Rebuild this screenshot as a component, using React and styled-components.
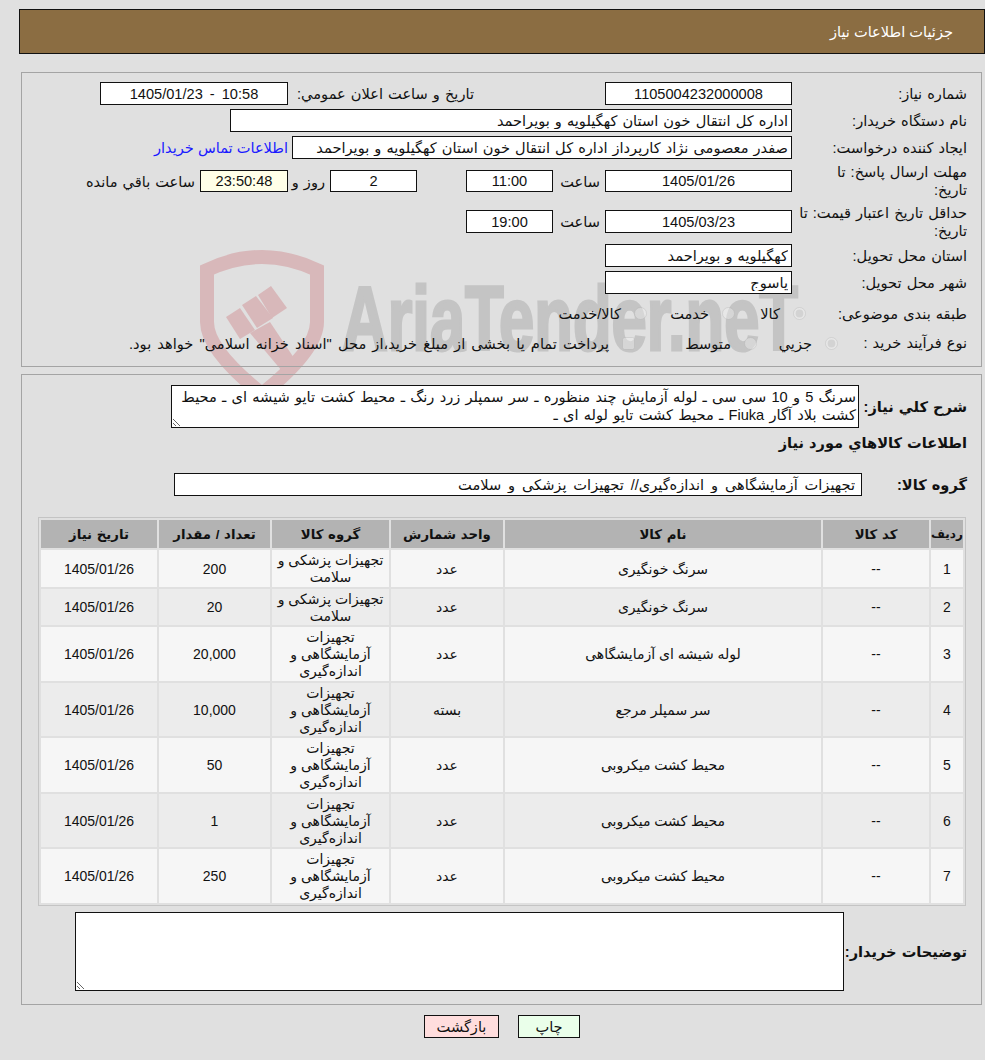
import React from 'react';
import styled, { createGlobalStyle } from 'styled-components';

const GlobalStyle = createGlobalStyle`
	html, body { margin: 0; padding: 0; background: #e0e0e0; }
	body { font-family: "Liberation Sans", "DejaVu Sans", sans-serif; font-size: 14.6px; color: #111; word-spacing: 1px; }
	* { box-sizing: border-box; }
`;

const Page = styled.div`
	position: relative;
	width: 985px;
	height: 1060px;
	padding: 9px 0 0 19px;
	overflow: hidden;
`;
const Watermark = styled.svg`
	position: absolute;
	left: 0;
	top: 0;
	width: 985px;
	height: 420px;
`;
const Content = styled.div`
	position: relative;
	display: flex;
	flex-direction: column;
`;
const Header = styled.div`
	height: 45px;
	background: #8b6d42;
	border: 1px solid #111;
	color: #fff;
	display: flex;
	align-items: center;
	padding-right: 31px;
	word-spacing: 0;
`;
const Panel = styled.div`
	margin: ${(p) => p.$top}px 3px 0 2px;
	border: 1px solid #a4a4a4;
	height: ${(p) => p.$h}px;
	padding-right: 14px;
`;
const FormGrid = styled.div`
	padding-top: 9px;
	display: grid;
	grid-template-rows: 23px 23px 23px 36px 37px 23px 23px 31px 20px;
	row-gap: 4px;
`;
const Row = styled.div`
	display: flex;
	align-items: center;
`;
const Label = styled.div`
	width: ${(p) => p.$w || 175}px;
	flex: none;
	line-height: 18px;
	white-space: nowrap;
`;
const Field = styled.input`
	width: ${(p) => p.$w}px;
	height: ${(p) => p.$h || 23}px;
	flex: none;
	border: 1px solid #111;
	border-radius: 0;
	background: ${(p) => p.$bg || '#fff'};
	font: inherit;
	word-spacing: ${(p) => p.$ws || 1}px;
	color: #111;
	padding: 0 ${(p) => p.$pad || 3}px 0 3px;
	outline: none;
	text-align: ${(p) => (p.$center ? 'center' : 'right')};
`;
const Inline = styled.div`
	flex: none;
	width: ${(p) => (p.$w ? `${p.$w}px` : 'auto')};
	padding-right: ${(p) => p.$pad || 0}px;
	white-space: nowrap;
`;
const Link = styled.a`
	color: #1a1aff;
	margin-right: 4px;
	white-space: nowrap;
	word-spacing: 0;
`;
const Radio = styled.input`
	margin: 0;
	width: 13px;
	height: 13px;
	flex: none;
	opacity: 0.55;
`;
const Choice = styled.label`
	display: flex;
	align-items: center;
	flex: none;
	width: ${(p) => (p.$w ? `${p.$w}px` : 'auto')};
	gap: 13px;
	white-space: nowrap;
	word-spacing: ${(p) => p.$ws || 1}px;
`;
const DescRow = styled.div`
	display: flex;
	align-items: center;
	margin-top: ${(p) => p.$top}px;
`;
const BoldLabel = styled.div`
	font-weight: bold;
	flex: none;
	width: ${(p) => (p.$w ? `${p.$w}px` : 'auto')};
`;
const Area = styled.textarea`
	display: block;
	width: ${(p) => p.$w}px;
	height: ${(p) => p.$h}px;
	flex: none;
	border: 1px solid #111;
	border-radius: 0;
	background: #fff;
	font: inherit;
	line-height: 18px;
	word-spacing: 1.2px;
	color: #111;
	padding: 2px;
	margin: 0;
	outline: none;
	overflow: hidden;
`;
const Table = styled.table`
	margin: 21px 1px 0 0;
	width: 927px;
	table-layout: fixed;
	border-collapse: separate;
	border-spacing: 2px;
	border: 1px solid #c4c4c4;
	font-size: 14px;
`;
const Th = styled.th`
	background: #b3b3b3;
	height: 28px;
	padding: 0;
	font-size: ${(p) => p.$size || 13.3}px;
	font-weight: bold;
	text-align: center;
	white-space: nowrap;
`;
const Td = styled.td`
	background: ${(p) => (p.$odd ? '#f6f6f6' : '#ececec')};
	padding: 2px 4px 0.5px;
	line-height: 17px;
	text-align: center;
	word-spacing: 0;
`;
const Buttons = styled.div`
	display: flex;
	justify-content: center;
	gap: 19px;
	margin-top: 10px;
`;
const Button = styled.button`
	width: ${(p) => p.$w}px;
	height: 23px;
	padding: 0;
	border: 1px solid #111;
	border-radius: 0;
	background: ${(p) => p.$bg};
	color: #111;
	font: inherit;
`;

const GROUP_A = 'تجهیزات پزشکی و سلامت';
const GROUP_B = 'تجهیزات آزمایشگاهی و اندازه‌گیری';
const COLS = [32, 106, 316, 112, 117, 111, 116];
const HEADS = ['ردیف', 'کد کالا', 'نام کالا', 'واحد شمارش', 'گروه کالا', 'تعداد / مقدار', 'تاریخ نیاز'];
const ROWS = [
	['سرنگ خونگیری', 'عدد', GROUP_A, '200'],
	['سرنگ خونگیری', 'عدد', GROUP_A, '20'],
	['لوله شیشه ای آزمایشگاهی', 'عدد', GROUP_B, '20,000'],
	['سر سمپلر مرجع', 'بسته', GROUP_B, '10,000'],
	['محیط کشت میکروبی', 'عدد', GROUP_B, '50'],
	['محیط کشت میکروبی', 'عدد', GROUP_B, '1'],
	['محیط کشت میکروبی', 'عدد', GROUP_B, '250'],
];

const Logo = () => (
	<Watermark viewBox="0 0 985 420">
		<path d="M207 270 Q262 244 317 270 V322 Q317 350 262 394 Q207 350 207 322 Z" fill="none" stroke="#d8b8ba" strokeWidth="14" />
		<g fill="#d8b8ba">
			<path d="M226 317 L240 308 L255 330 L240 339 Z" />
			<path d="M242 305 L256 296 L273 318 L257 328 Z" />
			<path d="M258 295 L271 286 L287 308 L272 318 Z" />
			<path d="M250 333 L270 322 L300 367 L287 377 Z" />
		</g>
		<text x="342" y="350" textLength="456" lengthAdjust="spacingAndGlyphs" fontFamily="Liberation Sans" fontWeight="bold" fontSize="90" fill="#c4c4c4" stroke="#c4c4c4" strokeWidth="3" direction="ltr">AriaTender.neT</text>
	</Watermark>
);

export default function App() {
	return (
		<Page dir="rtl">
			<GlobalStyle />
			<Logo />
			<Content>
				<Header>جزئیات اطلاعات نیاز</Header>
				<Panel $top={18} $h={295}>
					<FormGrid>
						<Row>
							<Label>شماره نیاز:</Label>
							<Field $w={187} $center readOnly value="1105004232000008" />
							<Inline $w={317} $pad={131}>تاريخ و ساعت اعلان عمومي:</Inline>
							<Field $w={188} $center $ws={3} readOnly value="10:58 - 1405/01/23" />
						</Row>
						<Row>
							<Label>نام دستگاه خریدار:</Label>
							<Field $w={562} readOnly value="اداره کل انتقال خون استان کهگیلویه و بویراحمد" />
						</Row>
						<Row>
							<Label>ایجاد کننده درخواست:</Label>
							<Field $w={500} readOnly value="صفدر معصومی نژاد کارپرداز اداره کل انتقال خون استان کهگیلویه و بویراحمد" />
							<Link>اطلاعات تماس خریدار</Link>
						</Row>
						<Row>
							<Label>مهلت ارسال پاسخ: تا<br />تاریخ:</Label>
							<Field $w={187} $h={22} $center readOnly value="1405/01/26" />
							<Inline $w={52} $pad={5}>ساعت</Inline>
							<Field $w={87} $h={22} $center readOnly value="11:00" />
							<Inline $w={49} />
							<Field $w={87} $h={22} $center readOnly value="2" />
							<Inline $w={42} $pad={5}>روز و</Inline>
							<Field $w={88} $h={22} $bg="#ffffe8" $center readOnly value="23:50:48" />
							<Inline $pad={5}>ساعت باقي مانده</Inline>
						</Row>
						<Row>
							<Label>حداقل تاریخ اعتبار قیمت: تا<br />تاریخ:</Label>
							<Field $w={187} $center readOnly value="1405/03/23" />
							<Inline $w={52} $pad={5}>ساعت</Inline>
							<Field $w={87} $center readOnly value="19:00" />
						</Row>
						<Row>
							<Label>استان محل تحویل:</Label>
							<Field $w={187} readOnly value="کهگیلویه و بویراحمد" />
						</Row>
						<Row>
							<Label>شهر محل تحویل:</Label>
							<Field $w={187} readOnly value="یاسوج" />
						</Row>
						<Row>
							<Label $w={161}>طبقه بندی موضوعی:</Label>
							<Choice $w={71}><Radio type="radio" disabled defaultChecked name="a" />کالا</Choice>
							<Choice $w={88}><Radio type="radio" disabled name="a" />خدمت</Choice>
							<Choice><Radio type="radio" disabled name="a" />کالا/خدمت</Choice>
						</Row>
						<Row>
							<Label $w={129}>نوع فرآیند خرید :</Label>
							<Choice $w={81}><Radio type="radio" disabled defaultChecked name="b" />جزيي</Choice>
							<Choice $w={122}><Radio type="radio" disabled name="b" />متوسط</Choice>
							<Choice $ws={2.1}><Radio type="checkbox" disabled />پرداخت تمام یا بخشی از مبلغ خرید،از محل "اسناد خزانه اسلامی" خواهد بود.</Choice>
						</Row>
					</FormGrid>
				</Panel>
				<Panel $top={7} $h={631}>
					<DescRow $top={10}>
						<BoldLabel $w={108}>شرح کلي نياز:</BoldLabel>
						<Area $w={688} $h={43} readOnly value="سرنگ 5 و 10 سی سی ـ لوله آزمایش چند منظوره ـ سر سمپلر زرد رنگ ـ محیط کشت تایو شیشه ای ـ محیط کشت بلاد آگار Fiuka ـ محیط کشت تایو لوله ای ـ" />
					</DescRow>
					<DescRow $top={6}>
						<BoldLabel>اطلاعات کالاهاي مورد نياز</BoldLabel>
					</DescRow>
					<DescRow $top={22}>
						<BoldLabel $w={105}>گروه کالا:</BoldLabel>
						<Field $w={688} $pad={6} $ws={2.8} readOnly value="تجهیزات آزمایشگاهی و اندازه‌گیری// تجهیزات پزشکی و سلامت" />
					</DescRow>
					<Table>
						<colgroup>
							{COLS.map((w, i) => <col key={i} width={w} />)}
						</colgroup>
						<thead>
							<tr>
								{HEADS.map((h, i) => <Th key={h} $size={i === 0 ? 12 : 13.3}>{h}</Th>)}
							</tr>
						</thead>
						<tbody>
							{ROWS.map((r, i) => (
								<tr key={i}>
									<Td $odd={i % 2 === 0}>{i + 1}</Td>
									<Td $odd={i % 2 === 0}>--</Td>
									<Td $odd={i % 2 === 0}>{r[0]}</Td>
									<Td $odd={i % 2 === 0}>{r[1]}</Td>
									<Td $odd={i % 2 === 0}>{r[2]}</Td>
									<Td $odd={i % 2 === 0}>{r[3]}</Td>
									<Td $odd={i % 2 === 0}>1405/01/26</Td>
								</tr>
							))}
						</tbody>
					</Table>
					<DescRow $top={6}>
						<BoldLabel $w={123}>توضیحات خریدار:</BoldLabel>
						<Area $w={769} $h={79} readOnly value="" />
					</DescRow>
				</Panel>
				<Buttons>
					<Button $w={62} $bg="#eaffea">چاپ</Button>
					<Button $w={75} $bg="#ffdddd">بازگشت</Button>
				</Buttons>
			</Content>
		</Page>
	);
}
